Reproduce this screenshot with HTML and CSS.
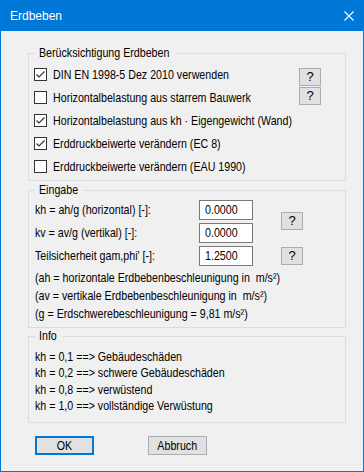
FILE: index.html
```html
<!DOCTYPE html>
<html lang="de">
  <head>
    <meta charset="UTF-8" />
    <title>Erdbeben</title>
    <link rel="stylesheet" href="styles.css">
  </head>
  <body>
    <div class="window">
      <div class="titlebar">
        <span class="title">Erdbeben</span>
        <svg class="close" width="10" height="10" viewBox="0 0 10 10">
          <path d="M0.5 0.5 L9.5 9.5 M9.5 0.5 L0.5 9.5" stroke="#fff" stroke-width="1.1" fill="none" />
        </svg>
      </div>

      <div class="content">
        <fieldset class="group group-options">
          <legend><span class="txt">Berücksichtigung Erdbeben</span></legend>
          <div class="options">
            <div class="checks">
              <label class="check">
                <span class="box"><svg width="11" height="11" viewBox="0 0 11 11"><path d="M1.5 5.5 L4 8 L9.5 2.5" /></svg></span>
                <span class="txt">DIN EN 1998-5 Dez 2010 verwenden</span>
              </label>
              <label class="check">
                <span class="box"></span>
                <span class="txt">Horizontalbelastung aus starrem Bauwerk</span>
              </label>
              <label class="check">
                <span class="box"><svg width="11" height="11" viewBox="0 0 11 11"><path d="M1.5 5.5 L4 8 L9.5 2.5" /></svg></span>
                <span class="txt">Horizontalbelastung aus kh · Eigengewicht (Wand)</span>
              </label>
              <label class="check">
                <span class="box"><svg width="11" height="11" viewBox="0 0 11 11"><path d="M1.5 5.5 L4 8 L9.5 2.5" /></svg></span>
                <span class="txt">Erddruckbeiwerte verändern (EC 8)</span>
              </label>
              <label class="check">
                <span class="box"></span>
                <span class="txt">Erddruckbeiwerte verändern (EAU 1990)</span>
              </label>
            </div>
            <div class="help-col">
              <button class="btn help">?</button>
              <button class="btn help">?</button>
            </div>
          </div>
        </fieldset>

        <fieldset class="group group-input">
          <legend><span class="txt">Eingabe</span></legend>
          <div class="inputs">
            <span class="field-label"><span class="txt">kh = ah/g (horizontal) [-]:</span></span>
            <span class="field"><span class="txt">0.0000</span></span>
            <button class="btn help help-span">?</button>
            <span class="field-label"><span class="txt">kv = av/g (vertikal) [-]:</span></span>
            <span class="field"><span class="txt">0.0000</span></span>
            <span class="field-label"><span class="txt">Teilsicherheit gam,phi' [-]:</span></span>
            <span class="field"><span class="txt">1.2500</span></span>
            <button class="btn help">?</button>
          </div>
          <div class="notes">
            <p><span class="txt">(ah = horizontale Erdbebenbeschleunigung in&nbsp; m/s²)</span></p>
            <p><span class="txt">(av = vertikale Erdbebenbeschleunigung in&nbsp; m/s²)</span></p>
            <p><span class="txt">(g = Erdschwerebeschleunigung = 9,81 m/s²)</span></p>
          </div>
        </fieldset>

        <fieldset class="group group-info">
          <legend><span class="txt">Info</span></legend>
          <p><span class="txt">kh = 0,1 ==&gt; Gebäudeschäden</span></p>
          <p><span class="txt">kh = 0,2 ==&gt; schwere Gebäudeschäden</span></p>
          <p><span class="txt">kh = 0,8 ==&gt; verwüstend</span></p>
          <p><span class="txt">kh = 1,0 ==&gt; vollständige Verwüstung</span></p>
        </fieldset>

        <div class="actions">
          <button class="btn action default"><span class="txt">OK</span></button>
          <button class="btn action"><span class="txt">Abbruch</span></button>
        </div>
      </div>
    </div>
  </body>
</html>
```

FILE: styles.css
```css
* {
  margin: 0;
  padding: 0;
  box-sizing: border-box;
}
body {
  font-family: "Liberation Sans", Arial, sans-serif;
  font-size: 13px;
  color: #000;
  background: #fff;
}
/* the dialog font is a narrow Arial, squeeze Liberation Sans to its width */
.txt {
  display: inline-block;
  white-space: nowrap;
  transform: scaleX(0.82);
  transform-origin: left center;
}
.window {
  width: 364px;
  height: 472px;
  border: 1px solid #0078d7;
  background-color: #f0f0f0;
}
.titlebar {
  height: 30px;
  background-color: #0078d7;
  display: flex;
  align-items: center;
  justify-content: space-between;
  padding: 0 9px 0 9px;
}
.title {
  font-family: "Liberation Sans", sans-serif;
  font-size: 12px;
  color: #fff;
}
.close {
  display: block;
}
.content {
  padding: 14px 17px 0 27px;
}
.group {
  border: 1px solid #dcdcdc;
  min-width: 0;
  padding: 0 6px;
}
.group legend {
  padding: 0 4px;
  line-height: 16px;
  overflow: hidden;
  white-space: nowrap;
}
.group p {
  white-space: nowrap;
}

/* Berücksichtigung Erdbeben */
.group-options {
  padding: 2px 6px 2px 5px;
}
.group-options legend {
  width: 142px;
  margin-left: 1px;
}
.options {
  display: grid;
  grid-template-columns: minmax(0, 1fr) 22px;
  padding-right: 18px;
}
.check {
  display: flex;
  align-items: center;
  gap: 6px;
  height: 23px;
  white-space: nowrap;
}
.box {
  flex: none;
  width: 13px;
  height: 13px;
  border: 1px solid #333;
  background-color: #fff;
  display: flex;
  align-items: center;
  justify-content: center;
}
.box svg path {
  fill: none;
  stroke: #333;
  stroke-width: 1.2;
}
.help-col {
  display: flex;
  flex-direction: column;
  gap: 1px;
  padding-top: 5px;
}
.btn {
  font-family: inherit;
  font-size: 13px;
  color: #000;
  background-color: #e1e1e1;
  border: 1px solid #adadad;
}
.help {
  width: 22px;
  height: 18px;
  line-height: 16px;
}

/* Eingabe */
.group-input {
  margin-top: 1px;
  padding-bottom: 4px;
}
.group-input legend {
  width: 49px;
}
.inputs {
  display: grid;
  grid-template-columns: 164px 54px 50px;
  grid-auto-rows: 23px;
  align-items: center;
}
.inputs .help {
  justify-self: end;
}
.field {
  height: 20px;
  width: 54px;
  border: 1px solid #7a7a7a;
  background-color: #fff;
  padding-left: 5px;
  line-height: 18px;
  overflow: hidden;
}
.help-span {
  grid-column: 3;
  grid-row: 1 / 3;
}
.notes {
  margin-top: 2px;
  line-height: 18px;
}

/* Info */
.group-info {
  padding: 5px 6px 8px 6px;
  line-height: 16.3px;
}
.group-info legend {
  width: 27px;
}

.actions {
  display: flex;
  gap: 54px;
  margin-top: 13px;
  padding-left: 7px;
}
.action {
  width: 59px;
  height: 19px;
  line-height: 17px;
}
.action .txt {
  transform-origin: center center;
}
.action.default {
  border: 2px solid #0078d7;
  line-height: 15px;
}
```
